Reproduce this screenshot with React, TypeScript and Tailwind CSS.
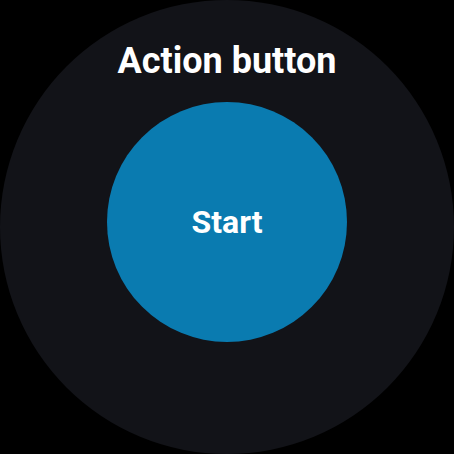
export default function App() {
  return (
    <div className="w-[454px] h-[454px] bg-black" style={{ fontFamily: "Roboto, 'Liberation Sans', sans-serif" }}>
      <div className="w-[454px] h-[454px] rounded-full bg-[#121318] flex flex-col items-center pt-[40px]">
        <div className="text-[36px] leading-[42px] font-bold text-white">Action button</div>
        <div className="mt-[20px] w-[240px] h-[240px] rounded-full bg-[#0a7bb0] flex items-center justify-center">
          <span className="text-[32px] leading-[38px] font-bold text-white">Start</span>
        </div>
      </div>
    </div>
  );
}
